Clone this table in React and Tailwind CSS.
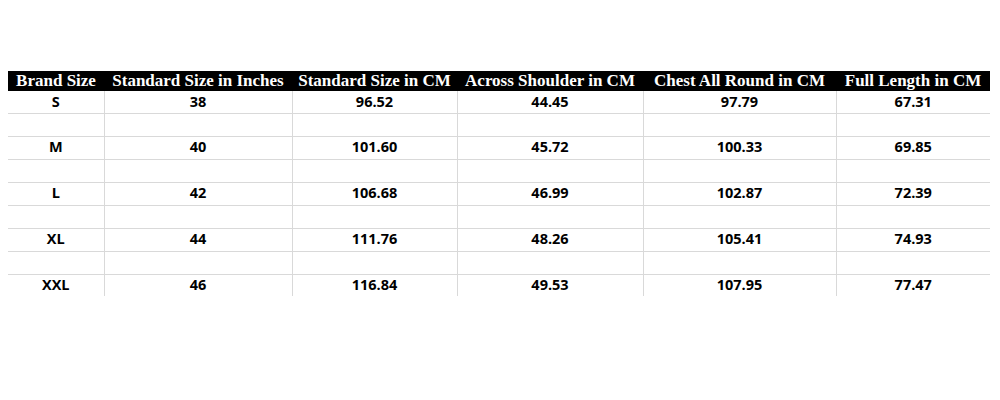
import React from 'react';

const headers = [
  'Brand Size',
  'Standard Size in Inches',
  'Standard Size in CM',
  'Across Shoulder in CM',
  'Chest All Round in CM',
  'Full Length in CM',
];

const widths = ['w-[96px]', 'w-[188px]', 'w-[165px]', 'w-[186px]', 'w-[193px]', 'w-[154px]'];

const rows = [
  ['S', '38', '96.52', '44.45', '97.79', '67.31'],
  ['M', '40', '101.60', '45.72', '100.33', '69.85'],
  ['L', '42', '106.68', '46.99', '102.87', '72.39'],
  ['XL', '44', '111.76', '48.26', '105.41', '74.93'],
  ['XXL', '46', '116.84', '49.53', '107.95', '77.47'],
];

// blank spacer rows sit between each size row
const allRows = rows.flatMap((r, i) => (i < rows.length - 1 ? [r, null] : [r]));

const App = () => {
  return (
    <div className="w-[1000px] h-[400px] bg-white pt-[71px] pl-[8px]">
      <table className="border-collapse table-fixed w-[982px]">
        <thead>
          <tr className="bg-black h-[20px]">
            {headers.map((h, i) => (
              <th
                key={h}
                className={`${widths[i]} p-0 text-white text-[17px] font-bold leading-[20px] text-center whitespace-nowrap font-['Liberation_Serif',serif]`}
              >
                {h}
              </th>
            ))}
          </tr>
        </thead>
        <tbody>
          {allRows.map((r, ri) => (
            <tr
              key={ri}
              className={`${ri === 0 || ri === allRows.length - 1 ? 'h-[22px]' : 'h-[23px]'} ${ri < allRows.length - 1 ? 'border-b border-[#d9d9d9]' : ''}`}
            >
              {headers.map((_, ci) => (
                <td
                  key={ci}
                  className={`p-0 text-center text-[14.5px] font-bold text-black leading-none font-['Open_Sans',sans-serif] ${ci < headers.length - 1 ? 'border-r border-[#d9d9d9]' : ''}`}
                >
                  {r ? r[ci] : ''}
                </td>
              ))}
            </tr>
          ))}
        </tbody>
      </table>
    </div>
  );
};

export default App;
